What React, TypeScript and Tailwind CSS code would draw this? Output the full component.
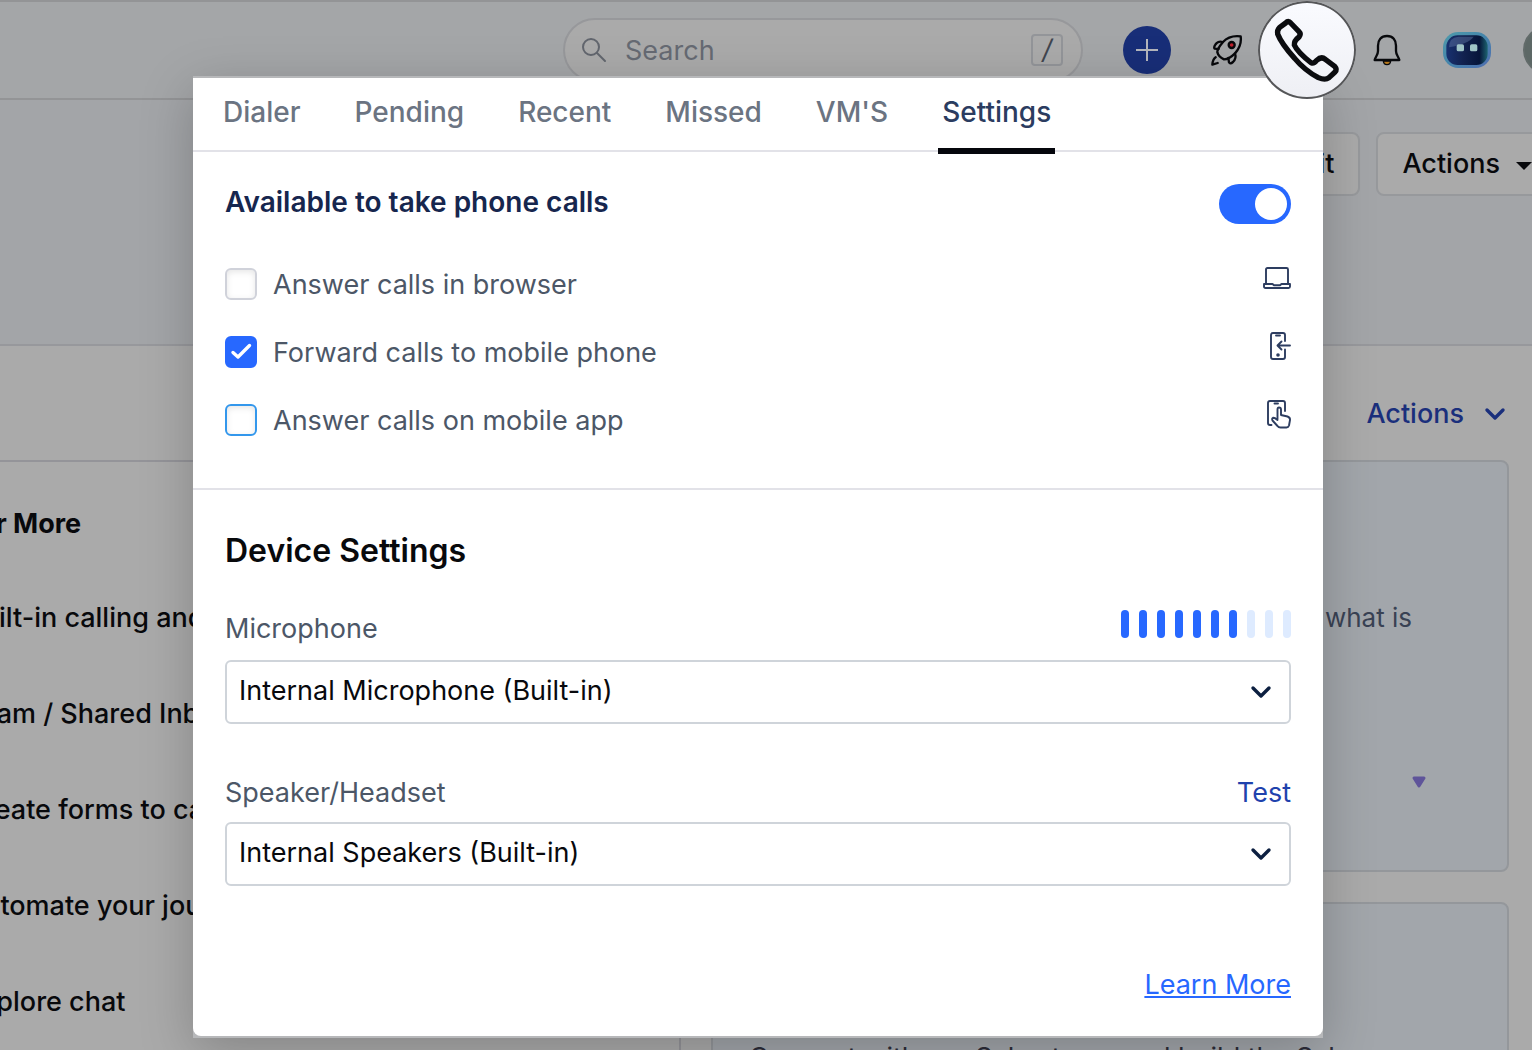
import { useState } from "react";

const tabs = ["Dialer", "Pending", "Recent", "Missed", "VM'S", "Settings"];
const tasks = ["Built-in calling and", "Team / Shared Inbox", "Create forms to call", "Automate your jour", "Explore chat"];
const meter = [true, true, true, true, true, true, true, false, false, false];

function Rocket() {
  return (
    <svg viewBox="0 0 96 96" className="size-8" fill="none" stroke="#08090c" strokeWidth="7" strokeLinecap="round" strokeLinejoin="round">
      <path d="M89 7C66 4 48 11 36 24C26 36 18 48 19 55C21 64 30 72 39 76C48 76 62 68 72 58C85 44 92 28 89 7Z" />
      <path d="M34 24C26 21 17 25 13 32C9 38 9 42 11 44L23 45" />
      <path d="M72 58C75 67 74 76 66 84C60 89 56 89 54 85L52 72" />
      <path d="M14 70C7 74 5 82 4 92L20 87" />
      <circle cx="62" cy="33" r="9" strokeWidth="7" fill="#c0202c" />
    </svg>
  );
}

function Handset() {
  return (
    <svg viewBox="0 0 294 294" className="size-full" fill="none" stroke="#0b0c0f" strokeWidth="16" strokeLinejoin="round">
      <path d="M83 66Q91 57 98 66L123 92Q130 99 123 108Q108 119 109 132Q118 153 160 186Q169 188 176 178Q190 165 202 175L231 197Q238 205 231 213L213 230Q202 239 181 230Q140 208 110 172Q70 128 59 99Q57 87 65 79Z" />
    </svg>
  );
}

function Bell() {
  return (
    <svg viewBox="0 0 96 96" className="size-8" fill="none" stroke="#08090c" strokeWidth="7" strokeLinejoin="round" strokeLinecap="round">
      <path d="M37 81Q38 92 48 92Q58 92 59 81Z" fill="#b87a1c" strokeWidth="4" />
      <path d="M48 6C30 6 21 19 21 35V51C21 64 13 68 11 78H85C83 68 75 64 75 51V35C75 19 66 6 48 6Z" />
    </svg>
  );
}

function Robot() {
  return (
    <svg viewBox="0 0 144 108" className="h-9 w-12">
      <defs>
        <linearGradient id="rim" x1="0" y1="0" x2="1" y2="1">
          <stop offset="0" stopColor="#4f9cab" />
          <stop offset="0.5" stopColor="#4484ab" />
          <stop offset="1" stopColor="#506db0" />
        </linearGradient>
        <linearGradient id="face" x1="0" y1="0" x2="1" y2="0">
          <stop offset="0" stopColor="#183170" />
          <stop offset="0.4" stopColor="#122250" />
          <stop offset="0.8" stopColor="#06153a" />
          <stop offset="1" stopColor="#1d6470" />
        </linearGradient>
      </defs>
      <rect width="144" height="108" rx="46" fill="url(#rim)" />
      <rect x="10" y="10" width="124" height="89" rx="34" fill="url(#face)" />
      <path d="M18 46Q18 16 46 14H92Q76 36 18 46Z" fill="#5a6f9d" opacity="0.5" />
      <rect x="41" y="37" width="22" height="21" rx="5" fill="#9fc4c6" />
      <rect x="81" y="37" width="22" height="21" rx="5" fill="#9fc4c6" />
    </svg>
  );
}

function Chevron({ className }: { className: string }) {
  return (
    <svg viewBox="0 0 22 14" className={className} fill="none" stroke="currentColor" strokeWidth="3.4" strokeLinecap="round" strokeLinejoin="round">
      <path d="M3 3L11 11L19 3" />
    </svg>
  );
}

const deviceIcons = [
  <svg key="laptop" viewBox="0 0 28 22" className="h-[22px] w-7" fill="none" stroke="#2d3d60" strokeWidth="1.9" strokeLinejoin="round">
    <path d="M3 17V2.500Q3 1 4.500 1H23.500Q25 1 25 2.500V17" />
    <path d="M1 17H9.500L11 18.300H17L18.500 17H27V19.500Q27 21 25.500 21H2.500Q1 21 1 19.500Z" />
  </svg>,
  <svg key="forward" viewBox="0 0 22 30" className="h-[30px] w-[22px]" fill="none" stroke="#2d3d60" strokeWidth="1.9" strokeLinecap="round" strokeLinejoin="round">
    <path d="M16 10V4Q16 2 14 2H4Q2 2 2 4V26Q2 28 4 28H14Q16 28 16 26V18.500M21 14.500H9M12.500 10.500L8.500 14.500L12.500 18.500M7 4.500H11" />
    <circle cx="9" cy="24" r="1.800" fill="#2d3d60" stroke="none" />
  </svg>,
  <svg key="touch" viewBox="0 0 24 30" className="h-[30px] w-6" fill="none" stroke="#2d3d60" strokeWidth="1.9" strokeLinecap="round" strokeLinejoin="round">
    <path d="M18 12V4Q18 2 16 2H3Q1 2 1 4V24Q1 26 3 26H4.500M7.500 4.500H11" />
    <path d="M10.500 20V10.500Q10.500 8.500 12 8.500Q14 8.500 14 10.500V16L20.500 17.500Q23.300 18.500 23 21L22 26.500Q21.300 28.500 19.500 28.500H13.500Q11.500 28.500 10.500 27L5.500 21.500Q4.500 19.500 6 18.800Q7.500 18.500 10.500 21" />
  </svg>,
];

const answerOptions = ["Answer calls in browser", "Forward calls to mobile phone", "Answer calls on mobile app"];

function DeviceSelect({ id, value }: { id: string; value: string }) {
  return (
    <div className="relative">
      <select id={id} className="h-16 w-full appearance-none rounded-md border-2 border-[#cfd4da] bg-white pr-14 pb-0.5 pl-3 text-[27px] text-[#08090d]">
        <option>{value}</option>
      </select>
      <Chevron className="pointer-events-none absolute top-[25px] right-[19px] h-3.5 w-[22px] text-[#0c1f40]" />
    </div>
  );
}

export default function App() {
  const [checked, setChecked] = useState([false, true, false]);
  return (
    <div className="relative flex h-screen flex-col overflow-hidden bg-[#aaaaaa] font-['Inter',sans-serif] text-[27px] text-[#08090c]">
      <header className="-mr-[39px] flex h-[100px] shrink-0 items-center justify-end border-y-2 border-[#939496] bg-[#a4a6a8]">
        <label className="mr-10 flex h-16 w-[520px] items-center rounded-full border-2 border-[#97989b] bg-[#aaaaaa] pr-[18px] pl-4">
          <svg viewBox="0 0 26 26" className="size-[26px] shrink-0" fill="none" stroke="#62666e" strokeWidth="2" strokeLinecap="round">
            <circle cx="10" cy="10" r="8" />
            <path d="M16 16L24 24" />
          </svg>
          <input type="search" aria-label="Search" placeholder="Search" className="ml-[18px] min-w-0 flex-1 bg-transparent pt-0.5 outline-none placeholder:text-[#666a73]" />
          <kbd className="flex size-8 items-center justify-center rounded-sm border-2 border-[#939599] font-['Inter'] text-[#40454f] italic">/</kbd>
        </label>
        <button aria-label="Add" className="mr-10 flex size-12 items-center justify-center rounded-full bg-[#182e78]">
          <svg viewBox="0 0 24 24" className="size-6" stroke="#b4b6bd" strokeWidth="2">
            <path d="M1 12H23M12 1V23" />
          </svg>
        </button>
        <button aria-label="Launch" className="mr-[15px]"><Rocket /></button>
        <button aria-label="Phone" className="relative z-20 mr-[15px] size-[98px] shrink-0 rounded-full bg-linear-to-b from-[#fafbff] to-[#eeeff4] ring-2 ring-[#555658] ring-inset"><Handset /></button>
        <button aria-label="Notifications" className="mr-10"><Bell /></button>
        <button aria-label="Assistant" className="mr-8"><Robot /></button>
        <button aria-label="Account" className="size-12 shrink-0 rounded-full border-2 border-[#626b6a] bg-[#5d6866]" />
      </header>

      <div className="-mr-[26px] flex h-[246px] shrink-0 items-start justify-end gap-4 border-b-2 border-[#97989c] bg-[#a3a5a8] pt-8 font-medium">
        <button className="h-16 rounded-lg border-2 border-[#97999c] bg-[#aaaaaa] px-6">Edit</button>
        <button className="flex h-16 items-center gap-4 rounded-lg border-2 border-[#97999c] bg-[#aaaaaa] px-6">
          Actions
          <svg viewBox="0 0 16 8" className="mt-1 h-2 w-4"><path d="M0 0H16L8 8Z" fill="#08090c" /></svg>
        </button>
      </div>

      <div className="flex h-[114px] shrink-0 items-center justify-end pt-[22px] pr-[26px]">
        <button className="flex items-center gap-5 font-medium text-[#1a2f7c]">
          Actions
          <Chevron className="h-3.5 w-[22px]" />
        </button>
      </div>

      <main className="flex min-h-0 flex-1">
        <section className="w-4/9 border-t-2 border-r-2 border-[#949499] pt-[42px] whitespace-nowrap">
          <h2 className="-ml-9 leading-10 font-bold">For More</h2>
          <ul className="mt-[26px] -ml-[35px] font-medium">
            {tasks.map((t) => (
              <li key={t} className="flex h-24 items-center">{t}</li>
            ))}
          </ul>
        </section>
        <section className="flex flex-1 flex-col gap-[30px] pr-[23px] pl-[30px]">
          <article className="flex h-[412px] shrink-0 flex-col items-end rounded-lg border-2 border-[#94979b] bg-[#a2a6ab] pt-[138px] pr-20 text-[#394254]">
            <p className="pr-[15px] text-[26px] leading-9">what is</p>
            <svg viewBox="0 0 16 14" className="mt-[139px] h-3.5 w-4"><path d="M3 3H13L8 11Z" fill="#5f549a" stroke="#5f549a" strokeWidth="3" strokeLinejoin="round" /></svg>
          </article>
          <article className="h-[412px] shrink-0 rounded-lg border-2 border-[#94979b] bg-[#a2a6ab] pt-[136px] pl-9 leading-9 whitespace-nowrap text-[#2c2c38]">
            <p>Connect with our Sales team and build the Sales</p>
          </article>
        </section>
      </main>

      <div className="absolute inset-x-0 top-[76px] z-10 pr-[209px] pl-[193px]">
        <div role="dialog" aria-label="Phone settings" className="bg-[#b7b8ba] py-0.5 shadow-[0_14px_50px_rgba(0,0,0,0.22)]">
          <div className="rounded-b-lg bg-white">
            <nav className="flex h-[74px] gap-[46px] border-b-2 border-[#e2e2e8] px-[26px] text-[28px] font-medium text-[#6b7482]">
              {tabs.map((t) =>
                t === "Settings" ? (
                  <button key={t} aria-current="page" className="relative px-1 pb-1 text-[#2b3c60] after:absolute after:inset-x-0 after:-bottom-1 after:h-1.5 after:bg-[#05060c]">{t}</button>
                ) : (
                  <button key={t} className="px-1 pb-1">{t}</button>
                ),
              )}
            </nav>

            <section className="border-b-2 border-[#e2e2e8] px-8 pt-8 pb-[52px]">
              <div className="flex items-start justify-between">
                <label htmlFor="available" className="text-[28px] leading-9 font-semibold text-[#16264e]">Available to take phone calls</label>
                <input id="available" type="checkbox" role="switch" defaultChecked className="relative h-10 w-[72px] appearance-none rounded-full bg-[#cfd4da] before:absolute before:top-1 before:left-1 before:size-8 before:rounded-full before:bg-white checked:bg-[#2768ff] checked:before:left-9" />
              </div>
              <div className="mt-11 flex justify-between">
                <ul className="flex flex-col gap-9 text-[#4c5767]">
                  {answerOptions.map((o, i) => (
                    <li key={o}>
                      <label className="flex h-8 items-center gap-4">
                        <span className="relative size-8">
                          <input
                            type="checkbox"
                            checked={checked[i]}
                            onChange={() => setChecked(checked.map((c, n) => (n === i ? !c : c)))}
                            className={
                              i === 2
                                ? "block size-8 appearance-none rounded-md border-2 border-[#3397ec] bg-white shadow-[inset_0_2px_6px_rgba(0,0,0,0.1)] checked:bg-[#2768ff]"
                                : "block size-8 appearance-none rounded-md border-2 border-[#d0d2da] bg-white shadow-[inset_0_2px_6px_rgba(0,0,0,0.1)] checked:border-[#2768ff] checked:bg-[#2768ff] checked:shadow-none"
                            }
                          />
                          {checked[i] && (
                            <svg viewBox="0 0 32 32" className="pointer-events-none absolute inset-0" fill="none" stroke="#fff" strokeWidth="3.4" strokeLinecap="round" strokeLinejoin="round">
                              <path d="M8 16.500L13 21L24.500 9.500" />
                            </svg>
                          )}
                        </span>
                        <span className="pt-0.5">{o}</span>
                      </label>
                    </li>
                  ))}
                </ul>
                <div className="-mt-1.5 flex flex-col gap-9">
                  {deviceIcons.map((icon, i) => (
                    <div key={i} className="flex h-8 items-center justify-end">{icon}</div>
                  ))}
                </div>
              </div>
            </section>

            <section className="px-8 pt-10 pb-8">
              <h2 className="text-[32px] leading-[42px] font-semibold">Device Settings</h2>
              <div className="mt-[38px] mb-3 flex items-start justify-between">
                <label htmlFor="microphone" className="leading-[38px] text-[#4c5767]">Microphone</label>
                <div role="meter" aria-label="Input level" aria-valuenow={7} aria-valuemin={0} aria-valuemax={10} className="flex gap-2.5">
                  {meter.map((on, i) => (
                    <span key={i} className={on ? "h-7 w-2 rounded-full bg-[#2768ff]" : "h-7 w-2 rounded-full bg-[#deebff]"} />
                  ))}
                </div>
              </div>
              <DeviceSelect id="microphone" value="Internal Microphone (Built-in)" />
              <div className="mt-[50px] mb-2.5 flex justify-between">
                <label htmlFor="speaker" className="leading-[38px] text-[#4c5767]">Speaker/Headset</label>
                <button className="leading-[38px] text-[#1f42ad]">Test</button>
              </div>
              <DeviceSelect id="speaker" value="Internal Speakers (Built-in)" />
              <div className="mt-20 flex justify-end">
                <a href="#learn-more" className="leading-[38px] text-[#2768ff] underline decoration-2 underline-offset-2">Learn More</a>
              </div>
            </section>
          </div>
        </div>
      </div>
    </div>
  );
}
